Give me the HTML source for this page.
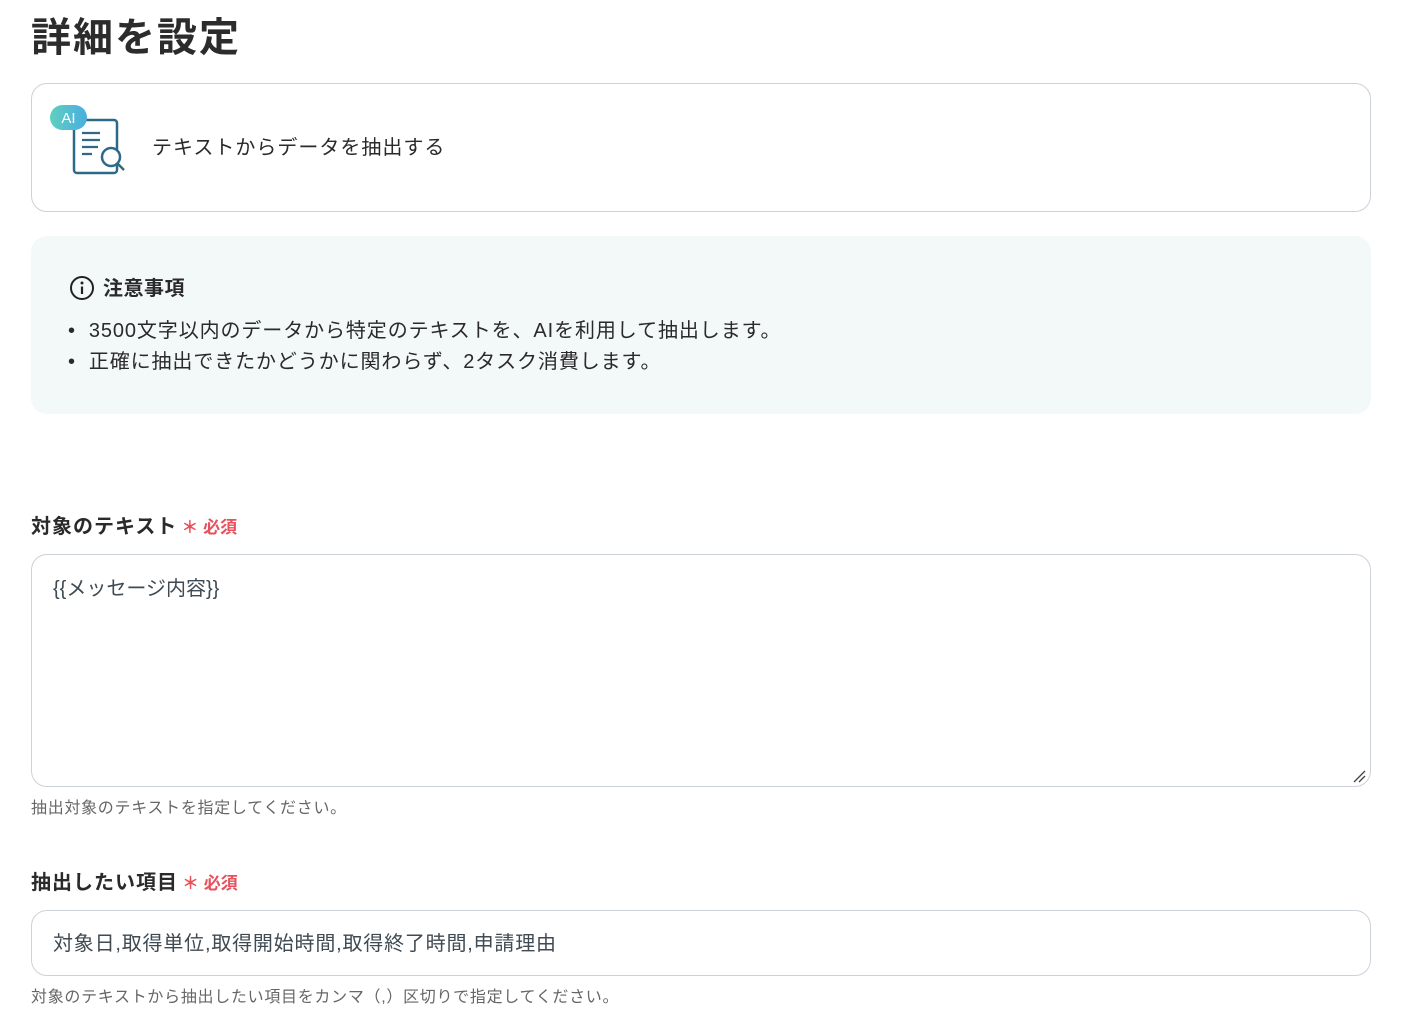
<!DOCTYPE html>
<html><head><meta charset="utf-8"><style>
*{box-sizing:border-box;margin:0;padding:0}
body{width:1418px;height:1036px;background:#fff;font-family:"Liberation Sans","Noto Sans CJK JP",sans-serif;color:#2a2a2a;position:relative;overflow:hidden}
.abs{position:absolute}
h1{position:absolute;left:31px;top:5px;font-size:40px;font-weight:700;color:#2c2c2c;letter-spacing:2px}
.card{left:31px;top:83px;width:1340px;height:129px;border:1px solid #ccd2d8;border-radius:16px}
.note{left:31px;top:236px;width:1340px;height:178px;background:#f3f8f8;border-radius:16px}
.lbl{font-size:20px;font-weight:700;color:#2a2a2a;letter-spacing:1px}
.req{color:#e8505b;font-size:17px;font-weight:700;letter-spacing:0;margin-left:4px}
.box{border:1px solid #ccd2d8;border-radius:16px;background:#fff}
.help{font-size:16px;color:#666;letter-spacing:0.7px}
</style></head><body>
<h1>詳細を設定</h1>
<div class="abs card"></div>
<svg class="abs" style="left:48px;top:102px" width="80" height="76" viewBox="0 0 80 76">
<defs><linearGradient id="g" x1="0" x2="1"><stop offset="0" stop-color="#5fcfc0"/><stop offset="1" stop-color="#4aaee0"/></linearGradient></defs>
<path d="M34 18 H66 a3 3 0 0 1 3 3 V68 a3 3 0 0 1 -3 3 H29 a3 3 0 0 1 -3 -3 V24" fill="none" stroke="#2e6a88" stroke-width="2.5"/>
<path d="M34 31H52M34 38H52M34 45H50M34 52H44" stroke="#2e6a88" stroke-width="2.3"/>
<circle cx="63" cy="55" r="9" fill="#fff" stroke="#2e6a88" stroke-width="2.5"/>
<path d="M69 61 L76 68" stroke="#2e6a88" stroke-width="2.5"/>
<rect x="2" y="3" width="37" height="25" rx="12.5" fill="url(#g)"/>
<text x="20.5" y="21" font-size="15" fill="#fff" text-anchor="middle" font-family="Liberation Sans,sans-serif">AI</text>
</svg>
<div class="abs" style="left:152px;top:131px;font-size:20px;color:#2a2a2a;letter-spacing:1px">テキストからデータを抽出する</div>
<div class="abs note"></div>
<svg class="abs" style="left:69px;top:275px" width="26" height="26" viewBox="0 0 26 26"><circle cx="13" cy="13" r="11" fill="none" stroke="#222" stroke-width="2"/><circle cx="13" cy="8" r="1.5" fill="#222"/><path d="M13 11.5V19" stroke="#222" stroke-width="2.2"/></svg>
<div class="abs" style="left:103px;top:272px;font-size:20px;font-weight:700;letter-spacing:0.5px">注意事項</div>
<div class="abs" style="left:68px;top:316px;font-size:20px;line-height:31px;letter-spacing:0.9px">
<div>•&nbsp; 3500文字以内のデータから特定のテキストを、AIを利用して抽出します。</div>
<div>•&nbsp; 正確に抽出できたかどうかに関わらず、2タスク消費します。</div></div>
<div class="abs lbl" style="left:31px;top:510px">対象のテキスト<span class="req">＊ 必須</span></div>
<div class="abs box" style="left:31px;top:554px;width:1340px;height:233px"></div>
<div class="abs" style="left:53px;top:572px;font-size:20px;color:#3f4a52">{{メッセージ内容}}</div>
<svg class="abs" style="left:1352px;top:769px" width="14" height="14"><path d="M2 13L13 2M7 13L13 7" stroke="#444" stroke-width="1.3"/></svg>
<div class="abs help" style="left:31px;top:794px">抽出対象のテキストを指定してください。</div>
<div class="abs lbl" style="left:31px;top:866px">抽出したい項目<span class="req">＊ 必須</span></div>
<div class="abs box" style="left:31px;top:910px;width:1340px;height:66px"></div>
<div class="abs" style="left:53px;top:927px;font-size:20px;color:#3f4a52;letter-spacing:0.8px">対象日,取得単位,取得開始時間,取得終了時間,申請理由</div>
<div class="abs help" style="left:31px;top:983px">対象のテキストから抽出したい項目をカンマ（,）区切りで指定してください。</div>
</body></html>
